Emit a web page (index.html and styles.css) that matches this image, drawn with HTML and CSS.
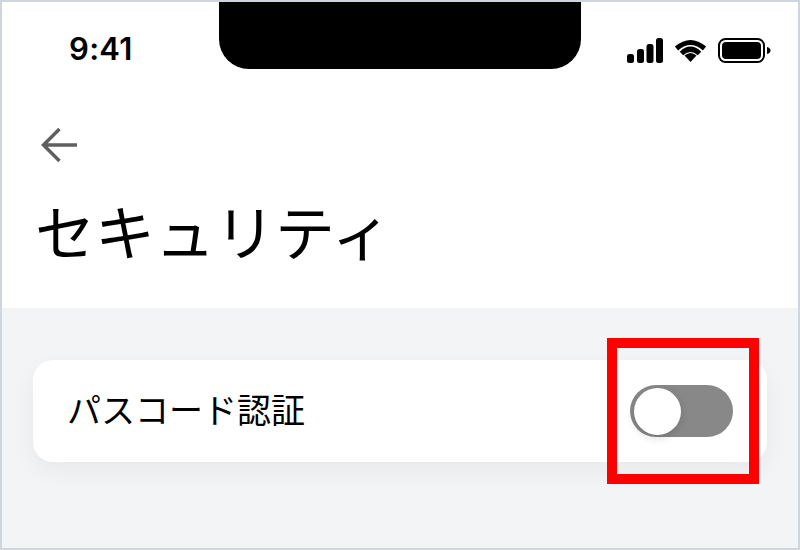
FILE: index.html
```html
<!DOCTYPE html>
<html lang="ja">
<head>
    <meta charset="UTF-8" />
    <title>セキュリティ</title>
    <link rel="stylesheet" href="styles.css">
</head>
<body>
    <main class="screen">
        <header class="top">
            <div class="status-bar">
                <span class="time">9:41</span>
                <div class="notch"></div>
                <div class="status-icons">
                    <svg width="36" height="25" viewBox="0 0 36 25">
                        <rect x="0" y="16" width="7" height="9" rx="2.5" />
                        <rect x="10" y="11" width="7" height="14" rx="2.5" />
                        <rect x="19.500" y="6" width="7" height="19" rx="2.5" />
                        <rect x="29" y="0" width="7" height="25" rx="2.5" />
                    </svg>
                    <svg width="33" height="24" viewBox="0 0 33 24">
                        <path d="M16.500 24 L10.500 17.500 Q16.500 12.500 22.500 17.500 Z" />
                        <path d="M2.500 10.500 Q16.500 -1.500 30.500 10.500" class="wifi-arc" />
                        <path d="M7.500 15.500 Q16.500 7 25.500 15.500" class="wifi-arc" />
                    </svg>
                    <svg width="53" height="25" viewBox="0 0 53 25">
                        <rect x="1" y="1" width="45" height="23" rx="6.500" class="battery-case" />
                        <rect x="4" y="4" width="39" height="17" rx="4" />
                        <path d="M49 9 Q52.500 10 52.500 12.500 Q52.500 15 49 16 Z" />
                    </svg>
                </div>
            </div>
            <svg class="back-arrow" width="38" height="36" viewBox="0 0 38 36">
                <path d="M36 18 H3 M18.500 2 L2.500 18 L18.500 34" />
            </svg>
            <h1>セキュリティ</h1>
        </header>
        <section class="content">
            <div class="row">
                <span class="row-label">パスコード認証</span>
                <div class="toggle"><div class="toggle-knob"></div></div>
            </div>
        </section>
        <div class="highlight"></div>
    </main>
</body>
</html>
```

FILE: styles.css
```css
html, body {
    margin: 0;
    height: 100%;
}
body {
    font-family: Inter, "Noto Sans CJK JP", sans-serif;
    background-color: #ced5dc;
    padding: 2px;
    box-sizing: border-box;
    overflow: hidden;
}
.screen {
    position: relative;
    height: 100%;
    display: flex;
    flex-direction: column;
    color: #000000;
}
.top {
    background-color: #ffffff;
    height: 306px;
    flex-shrink: 0;
}
.status-bar {
    display: flex;
    height: 67px;
    padding: 0 27px 0 67px;
}
.time {
    font-size: 31px;
    font-weight: 600;
    line-height: 35px;
    margin-top: 29px;
    width: 150px;
    letter-spacing: 0.3px;
}
.notch {
    width: 362px;
    height: 67px;
    background-color: #000000;
    border-radius: 0 0 30px 30px;
}
.status-icons {
    display: flex;
    align-items: flex-start;
    gap: 11px;
    margin-top: 36px;
    margin-left: auto;
}
.wifi-arc {
    fill: none;
    stroke: #000000;
    stroke-width: 5;
}
.battery-case {
    fill: none;
    stroke: #000000;
    stroke-width: 2;
}
.back-arrow {
    display: block;
    margin: 58px 0 0 39px;
}
.back-arrow path {
    fill: none;
    stroke: #5f5f5f;
    stroke-width: 3.5;
}
h1 {
    margin: 31px 0 0 33px;
    font-family: "Noto Sans CJK JP", sans-serif;
    font-size: 60px;
    font-weight: 400;
    line-height: 72px;
}
.content {
    flex: 1;
    background-color: #f3f4f6;
    padding: 52px 31px 0;
}
.row {
    display: flex;
    justify-content: space-between;
    align-items: center;
    height: 102px;
    padding: 0 34px 0 34px;
    background-color: #ffffff;
    border-radius: 20px;
    box-shadow: 0 8px 24px rgba(0, 0, 0, 0.05);
}
.row-label {
    font-family: "Noto Sans CJK JP", sans-serif;
    font-size: 34px;
    margin-bottom: 5px;
}
.toggle {
    width: 103px;
    height: 52px;
    padding: 3px 4px;
    box-sizing: border-box;
    border-radius: 26px;
    background-color: #888888;
}
.toggle-knob {
    width: 47px;
    height: 47px;
    border-radius: 50%;
    background-color: #ffffff;
    box-shadow: 0 3px 8px rgba(0, 0, 0, 0.15);
}
.highlight {
    position: absolute;
    left: 605px;
    top: 336px;
    width: 132px;
    height: 126px;
    border: 10px solid #ff0000;
}
```
